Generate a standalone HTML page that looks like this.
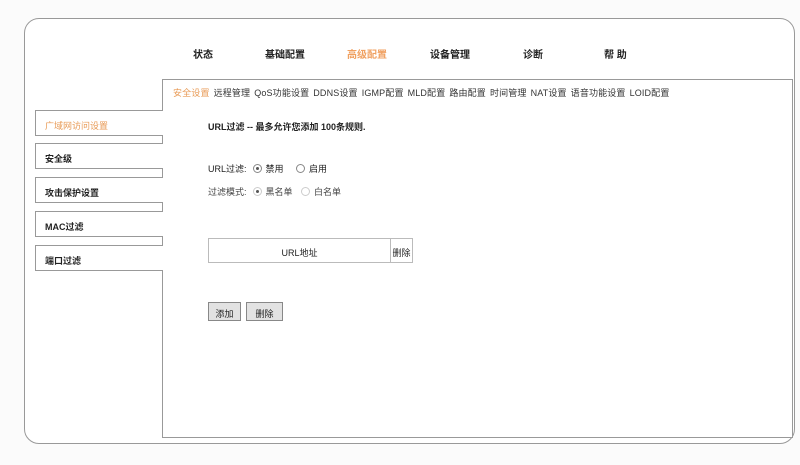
<!DOCTYPE html>
<html><head><meta charset="utf-8"><style>
*{margin:0;padding:0;box-sizing:border-box}
body{width:800px;height:465px;background:#fbfbfb;font-family:"Liberation Sans","Noto Sans CJK SC",sans-serif;font-size:9px;color:#222;position:relative;overflow:hidden}
.frame{position:absolute;left:24px;top:18px;width:771px;height:426px;border:1px solid #999;border-radius:15px;background:#fff}
.top{position:absolute;top:46px;font-size:10px;font-weight:bold;color:#222}
.panel{position:absolute;left:162px;top:79px;width:631px;height:359px;border:1px solid #999;background:#fff}
.sub{position:absolute;left:10px;top:6px;white-space:nowrap;font-size:9px;color:#333;letter-spacing:0.15px}
.sub span{margin-right:4px}
.lm{position:absolute;left:35px;width:128px;height:26px;border:1px solid #999;border-right:none;background:#fff;font-size:9px;font-weight:bold;padding:8px 0 0 9px}
.t{position:absolute;font-size:9px}
.r{display:inline-block;width:9px;height:9px;border:1px solid #888;border-radius:50%;vertical-align:-1px;margin:0 4px 0 6px;position:relative}
.r.on::after{content:"";position:absolute;left:2px;top:2px;width:3px;height:3px;border-radius:50%;background:#555}
.btn{position:absolute;top:302px;height:19px;border:1px solid #888;background:#e2e2e2;font-size:9px;padding-top:4px;text-align:center}
</style></head><body>
<div class="frame"></div>
<div class="top" style="left:193px">状态</div>
<div class="top" style="left:265px">基础配置</div>
<div class="top" style="left:347px;color:#f0a060">高级配置</div>
<div class="top" style="left:430px">设备管理</div>
<div class="top" style="left:523px">诊断</div>
<div class="top" style="left:604px">帮 助</div>
<div class="panel">
<div class="sub"><span style="color:#e89a55">安全设置</span><span>远程管理</span><span>QoS功能设置</span><span>DDNS设置</span><span>IGMP配置</span><span>MLD配置</span><span>路由配置</span><span>时间管理</span><span>NAT设置</span><span>语音功能设置</span><span>LOID配置</span></div>
</div>
<div class="lm" style="top:110px;color:#e89a55;font-weight:normal">广域网访问设置</div>
<div class="lm" style="top:143px">安全级</div>
<div class="lm" style="top:177px">攻击保护设置</div>
<div class="lm" style="top:211px">MAC过滤</div>
<div class="lm" style="top:245px">端口过滤</div>
<div class="t" style="left:208px;top:120px;font-weight:bold">URL过滤 -- 最多允许您添加 100条规则.</div>
<div class="t" style="left:208px;top:162px">URL过滤:<span class="r on"></span>禁用 <span class="r" style="margin-left:10px"></span>启用</div>
<div class="t" style="left:208px;top:185px;color:#444">过滤模式:<span class="r on" style="border-color:#ccc"></span>黑名单 <span class="r" style="border-color:#ccc"></span>白名单</div>
<div style="position:absolute;left:208px;top:238px;width:205px;height:25px;border:1px solid #bbb;display:flex">
<div style="flex:1;text-align:center;padding-top:7px;border-right:1px solid #bbb">URL地址</div>
<div style="width:21px;padding-top:7px;text-align:center">删除</div></div>
<div class="btn" style="left:208px;width:33px">添加</div>
<div class="btn" style="left:246px;width:37px">删除</div>
</body></html>
